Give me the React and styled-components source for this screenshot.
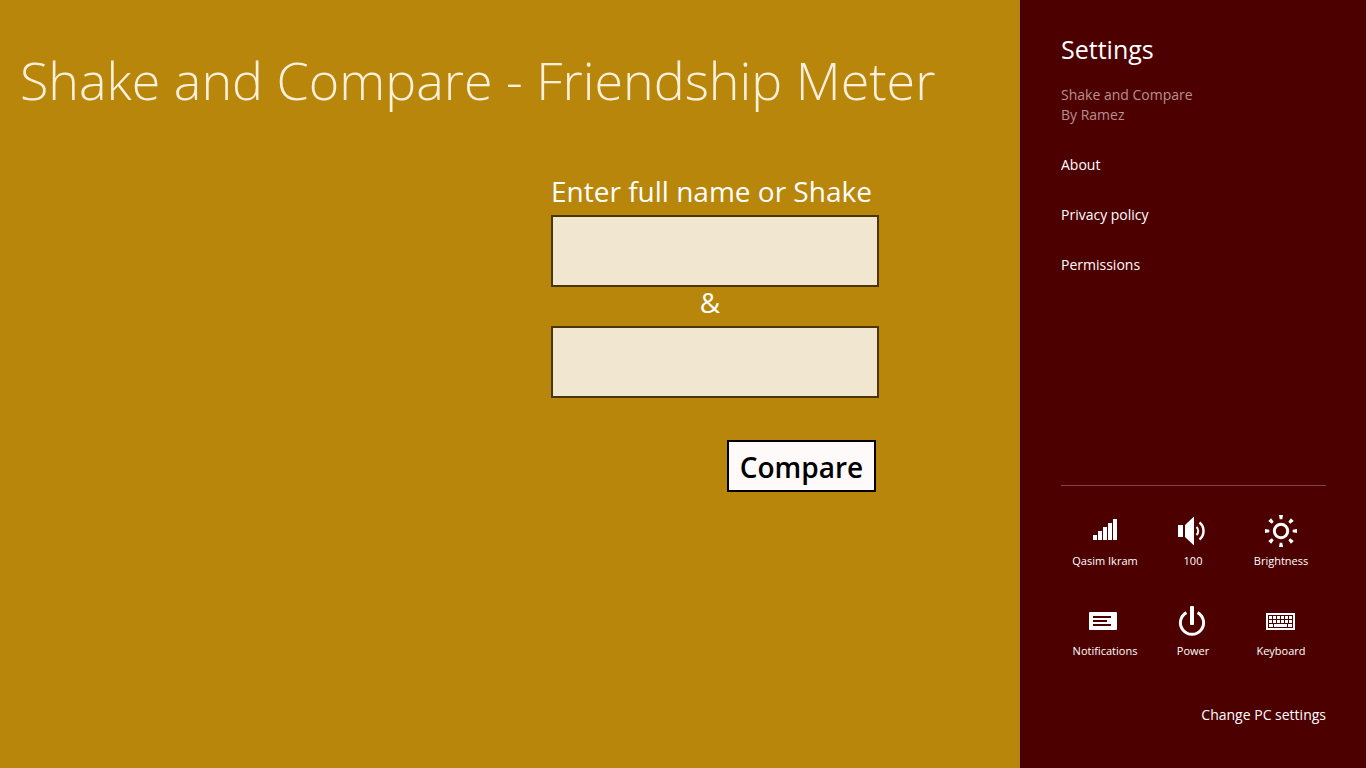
import React from "react";
import styled, { createGlobalStyle } from "styled-components";

const GlobalStyle = createGlobalStyle`
  * { box-sizing: border-box; }
  body { margin: 0; background: #b8860b; }
  body, button, input { font-family: "Open Sans", "Noto Sans", sans-serif; }
`;

const Screen = styled.div`
  display: flex;
  min-height: 100vh;
`;

const Main = styled.main`
  flex: 1;
  min-width: 0;
  background: #b8860b;
`;

const Title = styled.h1`
  margin: 0;
  padding: 40px 20px 0;
  color: #faf0dc;
  font-size: 52px;
  font-weight: 300;
  line-height: 80px;
  white-space: nowrap;
`;

const Form = styled.form`
  display: flex;
  flex-direction: column;
  width: 328px;
  margin: 52px 141px 0 auto;
`;

const FieldLabel = styled.label`
  color: #fff;
  font-size: 28px;
  line-height: 38px;
  height: 43px;
  white-space: nowrap;
`;

const Ampersand = styled(FieldLabel)`
  height: 39px;
  line-height: 30px;
  padding-right: 10px;
  text-align: center;
`;

const NameInput = styled.input`
  width: 100%;
  height: 72px;
  padding: 0 12px;
  border: 2px solid #4a3604;
  border-radius: 0;
  background: #f1e7d0;
  font-size: 28px;
  outline: none;
`;

const CompareButton = styled.button`
  align-self: flex-end;
  width: 149px;
  height: 52px;
  margin: 42px 3px 0 0;
  padding: 2px 0 0;
  border: 2px solid #000;
  background: #fffafa;
  color: #000;
  font-size: 28px;
  font-weight: 600;
`;

const Panel = styled.aside`
  display: flex;
  flex-direction: column;
  width: 346px;
  padding: 29px 40px 43px;
  background: #4d0000;
  border-left: 1px solid #3a0000;
  color: #fff;
`;

const PanelTitle = styled.h2`
  margin: 0 0 16px;
  font-size: 25px;
  font-weight: 400;
  line-height: 40px;
`;

const AppInfo = styled.p`
  margin: 0;
  color: #b89090;
  font-size: 14px;
  line-height: 20px;
`;

const PanelNav = styled.nav`
  display: flex;
  flex-direction: column;
  align-items: flex-start;
  gap: 30px;
  margin-top: 30px;
`;

const PanelLink = styled.a`
  color: #fff;
  font-size: 14px;
  line-height: 20px;
  text-decoration: none;
`;

const Controls = styled.div`
  display: grid;
  grid-template-columns: repeat(3, 88px);
  justify-content: start;
  row-gap: 33px;
  margin-top: auto;
  padding-top: 27px;
  border-top: 1px solid #7f4444;
`;

const Tile = styled.button`
  display: flex;
  flex-direction: column;
  align-items: center;
  gap: 3px;
  padding: 0;
  border: 0;
  background: none;
  color: #fff;
  font-size: 11px;
  line-height: 18px;
  white-space: nowrap;
`;

const Glyph = styled.svg`
  display: block;
  width: 36px;
  height: 36px;
`;

const SettingsLink = styled(PanelLink)`
  align-self: flex-end;
  margin-top: 45px;
`;

const SignalIcon = () => (
  <Glyph viewBox="0 0 36 36" fill="#fff" aria-hidden="true">
    {[5, 9, 13, 17, 21].map((h, i) => (
      <rect key={h} x={6 + i * 5} y={27 - h} width="4" height={h} />
    ))}
  </Glyph>
);

const VolumeIcon = () => (
  <Glyph viewBox="0 0 36 36" aria-hidden="true">
    <path d="M3 12h5v12H3zM10 12l9-8.5v29L10 24z" fill="#fff" />
    <path d="M21.5 14a5.5 5.5 0 0 1 0 8" fill="none" stroke="#fff" strokeWidth="2" />
    <path d="M24.5 9.5a11 11 0 0 1 0 17" fill="none" stroke="#fff" strokeWidth="2.5" />
  </Glyph>
);

const BrightnessIcon = () => (
  <Glyph viewBox="0 0 36 36" aria-hidden="true">
    <circle cx="18" cy="18" r="6.7" fill="none" stroke="#fff" strokeWidth="3" />
    {[0, 45, 90, 135, 180, 225, 270, 315].map((a) => (
      <path key={a} d="M16 2h4l-.7 4.3h-2.6z" fill="#fff" transform={`rotate(${a} 18 18)`} />
    ))}
  </Glyph>
);

const NotificationsIcon = () => (
  <Glyph viewBox="0 0 36 36" aria-hidden="true">
    <rect x="2" y="9" width="28" height="18" rx="1" fill="#fff" />
    <path d="M6 14h18M6 18h14M6 22h18" stroke="#4d0000" strokeWidth="2" />
  </Glyph>
);

const PowerIcon = () => (
  <Glyph viewBox="0 0 36 36" aria-hidden="true">
    <path d="M11.4 9.6a11.6 11.6 0 1 0 11.2 0" fill="none" stroke="#fff" strokeWidth="3" />
    <rect x="15" y="3" width="4" height="19" rx="1" fill="#fff" />
  </Glyph>
);

const KeyboardIcon = () => (
  <Glyph viewBox="0 0 36 36" fill="#fff" aria-hidden="true">
    <rect x="4" y="11" width="27" height="15" fill="none" stroke="#fff" strokeWidth="2" />
    {[13, 17].map((y) =>
      [6, 10, 14, 18, 22, 26].map((x) => <rect key={`${x}-${y}`} x={x} y={y} width="3" height="3" />)
    )}
    <path d="M6 21h4v3H6zM11 21h13v3H11zM25 21h4v3h-4z" />
  </Glyph>
);

const CONTROLS = [
  ["Qasim Ikram", SignalIcon],
  ["100", VolumeIcon],
  ["Brightness", BrightnessIcon],
  ["Notifications", NotificationsIcon],
  ["Power", PowerIcon],
  ["Keyboard", KeyboardIcon],
];

export default function App() {
  return (
    <Screen>
      <GlobalStyle />
      <Main>
        <Title>Shake and Compare - Friendship Meter</Title>
        <Form onSubmit={(e) => e.preventDefault()}>
          <FieldLabel htmlFor="first">Enter full name or Shake</FieldLabel>
          <NameInput id="first" type="text" />
          <Ampersand htmlFor="second">&amp;</Ampersand>
          <NameInput id="second" type="text" />
          <CompareButton type="submit">Compare</CompareButton>
        </Form>
      </Main>
      <Panel>
        <PanelTitle>Settings</PanelTitle>
        <AppInfo>Shake and Compare</AppInfo>
        <AppInfo>By Ramez</AppInfo>
        <PanelNav>
          {["About", "Privacy policy", "Permissions"].map((name) => (
            <PanelLink key={name} href="#">{name}</PanelLink>
          ))}
        </PanelNav>
        <Controls>
          {CONTROLS.map(([name, Icon]) => (
            <Tile key={name} type="button">
              <Icon />
              <span>{name}</span>
            </Tile>
          ))}
        </Controls>
        <SettingsLink href="#">Change PC settings</SettingsLink>
      </Panel>
    </Screen>
  );
}
